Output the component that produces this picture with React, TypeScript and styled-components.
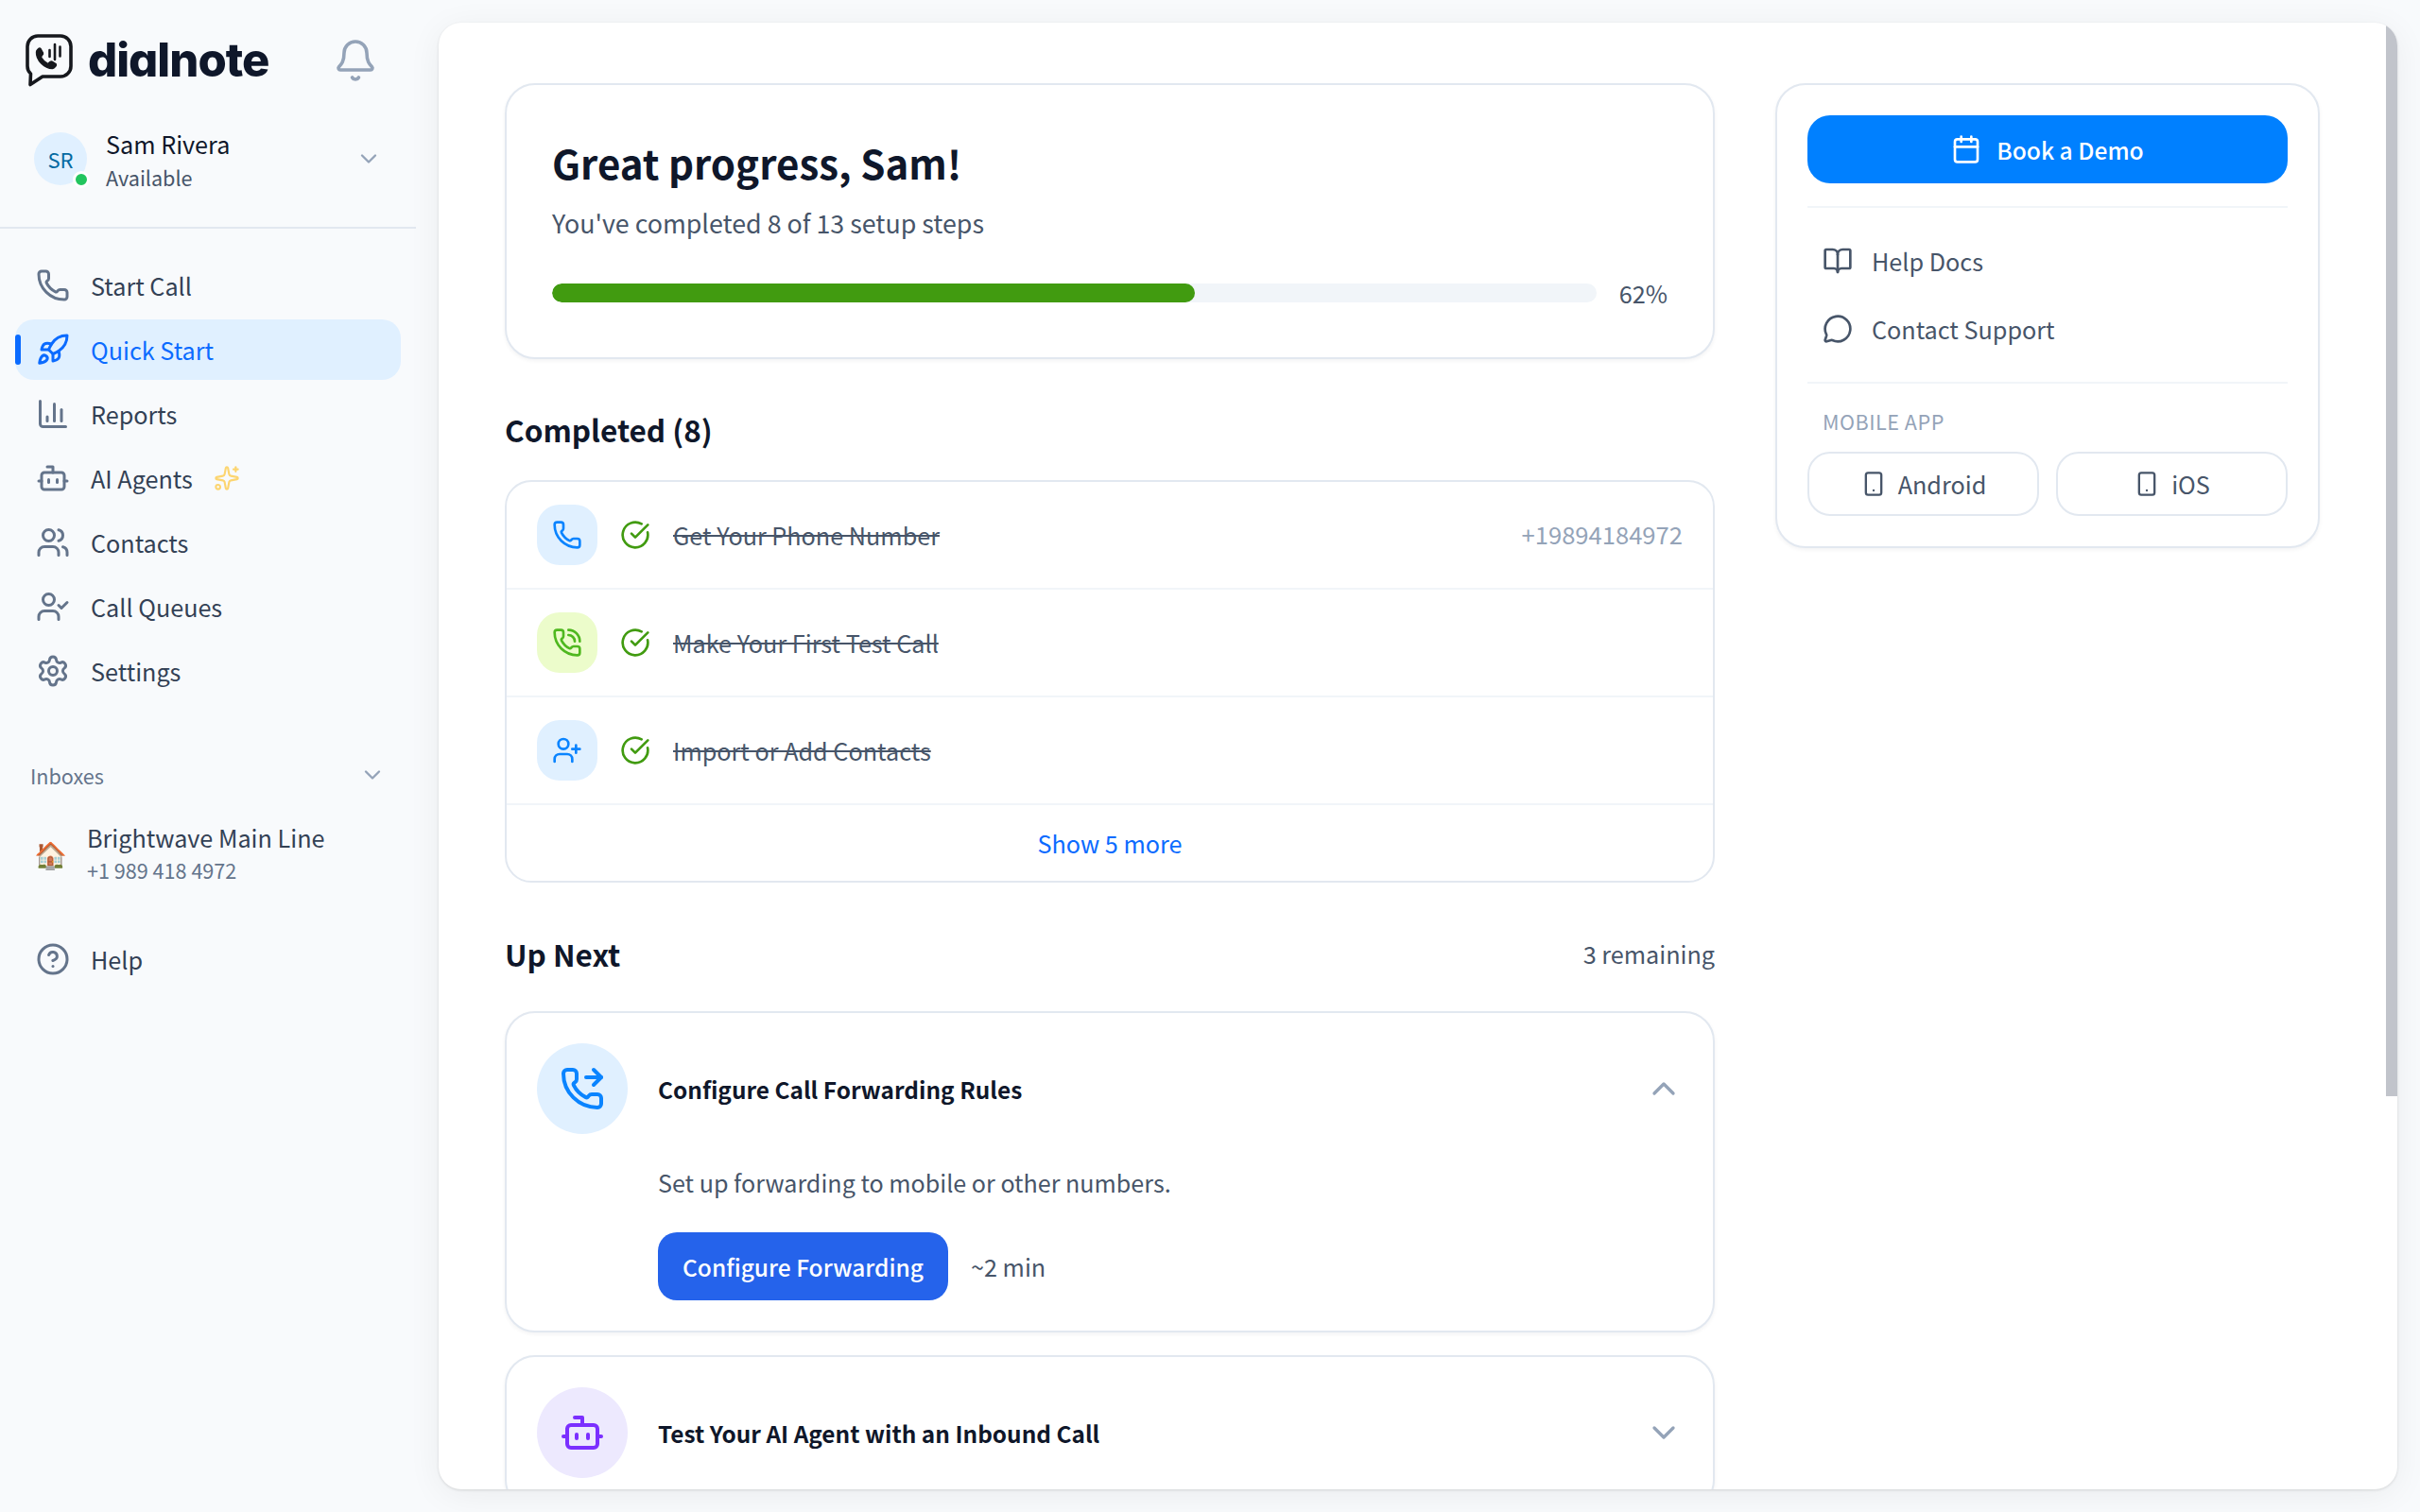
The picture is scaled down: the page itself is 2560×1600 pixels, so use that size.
import React from "react";
import { styled, createGlobalStyle } from "styled-components";
import {
  Bell, BookOpen, Bot, Calendar, ChartColumn, ChevronDown, ChevronUp, CircleCheckBig, CircleHelp,
  MessageCircle, Phone, PhoneCall, PhoneForwarded, Rocket, Settings, Smartphone, Sparkles,
  UserCheck, UserPlus, Users,
} from "lucide-react";

const GlobalStyle = createGlobalStyle`
  html, body { margin: 0; padding: 0; height: 100%; overflow: hidden; background: #f8fafc; }
  body { font-family: "Noto Sans CJK SC", "Noto Sans", sans-serif; color: #0f172a; }
  * { box-sizing: border-box; }
`;

const Page = styled.div`
  display: flex;
  height: 100vh;
  background: #f8fafc;
`;

const Sidebar = styled.aside`
  width: 440px;
  flex-shrink: 0;
  display: flex;
  flex-direction: column;
`;

const LogoRow = styled.div`
  display: flex;
  align-items: center;
  justify-content: space-between;
  padding: 36px 40px 0 27px;
  color: #94a3b8;
`;

const LogoMark = styled.div`
  display: flex;
  align-items: center;
  gap: 16px;
`;

const LogoText = styled.span`
  font-family: Inter, "Liberation Sans", sans-serif;
  font-size: 49px;
  font-weight: 800;
  line-height: 56px;
  letter-spacing: -1px;
  color: #0f172a;
  font-feature-settings: "cv11" 1;
`;

const UserRow = styled.div`
  display: flex;
  align-items: center;
  gap: 20px;
  height: 150px;
  padding: 48px 36px 44px 36px;
  border-bottom: 2px solid #e2e8f0;
  color: #94a3b8;
`;

const Avatar = styled.div`
  position: relative;
  width: 56px;
  height: 56px;
  border-radius: 50%;
  background: #e0f0ff;
  color: #0369a1;
  font-size: 22px;
  line-height: 56px;
  text-align: center;
  flex-shrink: 0;

  &::after {
    content: "";
    position: absolute;
    right: -3px;
    bottom: -3px;
    width: 12px;
    height: 12px;
    border-radius: 50%;
    background: #22c55e;
    border: 3px solid #fff;
    box-sizing: content-box;
  }
`;

const UserText = styled.div`
  flex: 1;
  display: flex;
  flex-direction: column;
  margin-top: 3px;
`;

const UserName = styled.span`
  font-size: 25.2px;
  line-height: 35px;
  color: #0f172a;
`;

const UserStatus = styled.span`
  font-size: 21.6px;
  line-height: 35px;
  color: #475569;
`;

const Nav = styled.nav`
  display: flex;
  flex-direction: column;
  gap: 4px;
  padding: 28px 16px 0;
`;

const NavItem = styled.a<{ $active?: boolean }>`
  position: relative;
  display: flex;
  align-items: center;
  gap: 22px;
  height: 64px;
  padding: 0 22px;
  border-radius: 20px;
  font-size: 25.2px;
  color: ${(p) => (p.$active ? "#0b6bff" : "#334155")};
  background: ${(p) => (p.$active ? "#e0f0ff" : "transparent")};

  svg:first-child {
    color: ${(p) => (p.$active ? "#0b6bff" : "#64748b")};
  }

  ${(p) =>
    p.$active &&
    `&::before {
      content: "";
      position: absolute;
      left: 0;
      top: 16px;
      width: 6px;
      height: 32px;
      border-radius: 3px;
      background: #0b6bff;
    }`}
`;

const AiSpark = styled(Sparkles)`
  color: #fcd570;
`;

const InboxHeader = styled.div`
  display: flex;
  align-items: center;
  justify-content: space-between;
  height: 36px;
  margin-top: 60px;
  padding: 0 32px;
  font-size: 21.6px;
  color: #64748b;
  svg {
    color: #94a3b8;
  }
`;

const InboxRow = styled.div`
  display: flex;
  align-items: center;
  gap: 24px;
  padding: 30px 36px 0;
`;

const InboxEmoji = styled.span`
  font-size: 28px;
  line-height: 32px;
  width: 32px;
  text-align: center;
  flex-shrink: 0;
`;

const InboxText = styled.div`
  display: flex;
  flex-direction: column;
`;

const InboxName = styled.span`
  font-size: 25.2px;
  line-height: 36px;
  color: #334155;
`;

const InboxPhone = styled.span`
  font-size: 21.6px;
  line-height: 34px;
  color: #64748b;
`;

const HelpNav = styled(Nav)`
  padding-top: 45px;
`;

const MainCard = styled.main`
  position: relative;
  flex: 1;
  margin: 24px;
  background: #fff;
  border-radius: 24px;
  box-shadow: 0 1px 3px rgba(0, 0, 0, 0.12), 0 6px 36px rgba(0, 0, 0, 0.06);
  overflow: hidden;
`;

const ScrollThumb = styled.div`
  position: absolute;
  top: 0;
  right: 0;
  width: 12px;
  height: 1136px;
  background: #c1c4cb;
`;

const Columns = styled.div`
  display: grid;
  grid-template-columns: 1280px 576px;
  gap: 64px;
  padding: 64px 0 0 70px;
  align-items: start;
`;

const LeftColumn = styled.div`
  display: flex;
  flex-direction: column;
`;

const Card = styled.section`
  background: #fff;
  border: 2px solid #e2e8f0;
  border-radius: 32px;
  box-shadow: 0 2px 4px rgba(15, 23, 42, 0.05);
`;

const ProgressCard = styled(Card)`
  padding: 50px 48px 0;
  height: 292px;
`;

const Heading = styled.h1`
  margin: 0;
  font-size: 42px;
  line-height: 64px;
  font-weight: 700;
  color: #0f172a;
`;

const SubText = styled.p`
  margin: 12px 0 0;
  font-size: 26.8px;
  line-height: 40px;
  color: #475569;
`;

const ProgressRow = styled.div`
  display: flex;
  align-items: center;
  gap: 24px;
  margin-top: 34px;
`;

const Track = styled.div`
  flex: 1;
  height: 20px;
  border-radius: 10px;
  background: #f1f5f9;
  overflow: hidden;
`;

const Fill = styled.div`
  height: 100%;
  border-radius: 10px;
  background: #419b10;
`;

const Percent = styled.span`
  font-size: 25.2px;
  line-height: 40px;
  color: #475569;
`;

const SectionHeader = styled.div<{ $top: number; $bottom: number }>`
  display: flex;
  align-items: center;
  justify-content: space-between;
  margin: ${(p) => p.$top}px 0 ${(p) => p.$bottom}px;
  height: 48px;
`;

const SectionTitle = styled.h2`
  margin: 0;
  font-size: 31.5px;
  line-height: 48px;
  font-weight: 700;
  color: #0f172a;
`;

const Remaining = styled.span`
  font-size: 25.2px;
  color: #475569;
`;

const ListCard = styled(Card)`
  border-radius: 28px;
  box-shadow: none;
  overflow: hidden;
`;

const DoneRow = styled.div`
  display: flex;
  align-items: center;
  gap: 24px;
  height: 114px;
  padding: 0 32px;
  border-bottom: 2px solid #f1f5f9;
`;

const Tile = styled.div<{ $bg: string; $fg: string }>`
  display: flex;
  align-items: center;
  justify-content: center;
  width: 64px;
  height: 64px;
  border-radius: 24px;
  background: ${(p) => p.$bg};
  color: ${(p) => p.$fg};
  flex-shrink: 0;
`;

const DoneCheck = styled(CircleCheckBig)`
  color: #419b10;
  flex-shrink: 0;
`;

const DoneLabel = styled.span`
  flex: 1;
  font-size: 25.2px;
  color: #475569;
  text-decoration: line-through;
`;

const DoneMeta = styled.span`
  font-size: 25.6px;
  margin-bottom: 3px;
  color: #94a3b8;
`;

const ShowMore = styled.div`
  height: 80px;
  display: flex;
  align-items: center;
  justify-content: center;
  font-size: 25.2px;
  color: #0b6bff;
`;

const StepCard = styled(Card)`
  padding: 32px;
  margin-bottom: 24px;
  border-radius: 32px;
`;

const StepHead = styled.div`
  display: flex;
  align-items: center;
  gap: 32px;
`;

const StepCircle = styled.div<{ $bg: string; $fg: string }>`
  display: flex;
  align-items: center;
  justify-content: center;
  width: 96px;
  height: 96px;
  border-radius: 50%;
  background: ${(p) => p.$bg};
  color: ${(p) => p.$fg};
  flex-shrink: 0;
`;

const StepTitle = styled.h3`
  flex: 1;
  margin: 0;
  font-size: 24.4px;
  font-weight: 700;
  color: #0f172a;
`;

const StepToggle = styled.span`
  display: flex;
  color: #94a3b8;
`;

const StepBody = styled.div`
  padding-left: 128px;
`;

const StepDesc = styled.p`
  margin: 31px 0 33px;
  font-size: 25.1px;
  line-height: 40px;
  color: #475569;
`;

const StepActions = styled.div`
  display: flex;
  align-items: center;
  gap: 24px;
`;

const PrimaryButton = styled.button`
  height: 72px;
  padding: 0 26px;
  border: 0;
  border-radius: 20px;
  background: #2563eb;
  color: #fff;
  font: 500 24.5px "Noto Sans CJK SC", sans-serif;
`;

const Duration = styled.span`
  font-size: 25.2px;
  color: #475569;
`;

const SideCard = styled(Card)`
  padding: 32px;
  border-radius: 32px;
`;

const DemoButton = styled.button`
  display: flex;
  align-items: center;
  justify-content: center;
  gap: 16px;
  width: 100%;
  height: 72px;
  border: 0;
  border-radius: 24px;
  background: #0080ff;
  color: #fff;
  font: 500 24.6px "Noto Sans CJK SC", sans-serif;
`;

const Divider = styled.div<{ $top: number; $bottom: number }>`
  height: 2px;
  margin: ${(p) => p.$top}px 0 ${(p) => p.$bottom}px;
  background: #f1f5f9;
`;

const SideLinks = styled.div`
  display: flex;
  flex-direction: column;
  gap: 8px;
`;

const SideLink = styled.a`
  display: flex;
  align-items: center;
  gap: 20px;
  height: 64px;
  padding: 0 16px;
  font-size: 25.2px;
  color: #475569;
`;

const SideLabel = styled.div`
  padding: 0 16px;
  font-size: 21.6px;
  line-height: 32px;
  letter-spacing: 0.5px;
  color: #94a3b8;
`;

const AppButtons = styled.div`
  display: grid;
  grid-template-columns: 1fr 1fr;
  gap: 18px;
  margin-top: 16px;
`;

const AppButton = styled.button`
  display: flex;
  align-items: center;
  justify-content: center;
  gap: 12px;
  height: 68px;
  border: 2px solid #e2e8f0;
  border-radius: 24px;
  background: #fff;
  color: #475569;
  font: 400 25.2px "Noto Sans CJK SC", sans-serif;
`;

const navItems = [
  { label: "Start Call", icon: Phone },
  { label: "Quick Start", icon: Rocket, active: true },
  { label: "Reports", icon: ChartColumn },
  { label: "AI Agents", icon: Bot, spark: true },
  { label: "Contacts", icon: Users },
  { label: "Call Queues", icon: UserCheck },
  { label: "Settings", icon: Settings },
];

const doneSteps = [
  { label: "Get Your Phone Number", icon: Phone, bg: "#e0f0ff", fg: "#0a84ff", meta: "+19894184972" },
  { label: "Make Your First Test Call", icon: PhoneCall, bg: "#ecfccb", fg: "#4fb81f" },
  { label: "Import or Add Contacts", icon: UserPlus, bg: "#e0f0ff", fg: "#0a84ff" },
];

function LogoIcon() {
  return (
    <svg width="50" height="56" viewBox="0 0 50 56" fill="none">
      <path
        d="M13 2h24a11 11 0 0 1 11 11v21a11 11 0 0 1-11 11H18L5 53.500 5.500 42Q2 39 2 34V13A11 11 0 0 1 13 2Z"
        stroke="#16181d"
        strokeWidth="3.600"
        strokeLinejoin="round"
      />
      <path
        d="M11.500 19c0-2 3-5 4.500-3.500l2.500 4.500c.5 1-.2 2-1.500 3.200-.6.6-.5 1.200 0 2.100 1.500 2.500 3.400 4.300 5.800 5.600.8.400 1.400.3 2-.4 1.100-1.300 2.100-2 3.200-1.400l4 2.500c1.500 1-1.300 4.800-3.500 4.900C20 36.500 11 27.500 11.500 19Z"
        fill="#16181d"
        stroke="#16181d"
        strokeWidth="1.400"
        strokeLinejoin="round"
      />
      <path d="M25.500 17v7M31 11v16M36.500 13.500v10" stroke="#16181d" strokeWidth="2.600" strokeLinecap="round" />
    </svg>
  );
}

export default function App() {
  return (
    <Page>
      <GlobalStyle />
      <Sidebar>
        <LogoRow>
          <LogoMark>
            <LogoIcon />
            <LogoText>dialnote</LogoText>
          </LogoMark>
          <Bell size={48} strokeWidth={1.8} />
        </LogoRow>
        <UserRow>
          <Avatar>SR</Avatar>
          <UserText>
            <UserName>Sam Rivera</UserName>
            <UserStatus>Available</UserStatus>
          </UserText>
          <ChevronDown size={28} />
        </UserRow>
        <Nav>
          {navItems.map((item) => (
            <NavItem key={item.label} $active={item.active}>
              <item.icon size={36} strokeWidth={2} />
              {item.label}
              {item.spark && <AiSpark size={28} strokeWidth={1.8} />}
            </NavItem>
          ))}
        </Nav>
        <InboxHeader>
          Inboxes
          <ChevronDown size={28} />
        </InboxHeader>
        <InboxRow>
          <InboxEmoji>🏠</InboxEmoji>
          <InboxText>
            <InboxName>Brightwave Main Line</InboxName>
            <InboxPhone>+1 989 418 4972</InboxPhone>
          </InboxText>
        </InboxRow>
        <HelpNav>
          <NavItem>
            <CircleHelp size={36} strokeWidth={2} />
            Help
          </NavItem>
        </HelpNav>
      </Sidebar>
      <MainCard>
        <ScrollThumb />
        <Columns>
          <LeftColumn>
            <ProgressCard>
              <Heading>Great progress, Sam!</Heading>
              <SubText>You've completed 8 of 13 setup steps</SubText>
              <ProgressRow>
                <Track>
                  <Fill style={{ width: `${(8 / 13) * 100}%` }} />
                </Track>
                <Percent>62%</Percent>
              </ProgressRow>
            </ProgressCard>
            <SectionHeader $top={50} $bottom={30}>
              <SectionTitle>Completed (8)</SectionTitle>
            </SectionHeader>
            <ListCard>
              {doneSteps.map((step) => (
                <DoneRow key={step.label}>
                  <Tile $bg={step.bg} $fg={step.fg}>
                    <step.icon size={32} strokeWidth={2} />
                  </Tile>
                  <DoneCheck size={32} strokeWidth={2} />
                  <DoneLabel>{step.label}</DoneLabel>
                  {step.meta && <DoneMeta>{step.meta}</DoneMeta>}
                </DoneRow>
              ))}
              <ShowMore>Show 5 more</ShowMore>
            </ListCard>
            <SectionHeader $top={51} $bottom={37}>
              <SectionTitle>Up Next</SectionTitle>
              <Remaining>3 remaining</Remaining>
            </SectionHeader>
            <StepCard>
              <StepHead>
                <StepCircle $bg="#e0f0ff" $fg="#0a84ff">
                  <PhoneForwarded size={48} strokeWidth={2} />
                </StepCircle>
                <StepTitle>Configure Call Forwarding Rules</StepTitle>
                <StepToggle>
                  <ChevronUp size={40} strokeWidth={2} />
                </StepToggle>
              </StepHead>
              <StepBody>
                <StepDesc>Set up forwarding to mobile or other numbers.</StepDesc>
                <StepActions>
                  <PrimaryButton>Configure Forwarding</PrimaryButton>
                  <Duration>~2 min</Duration>
                </StepActions>
              </StepBody>
            </StepCard>
            <StepCard>
              <StepHead>
                <StepCircle $bg="#ede9fe" $fg="#7b2fff">
                  <Bot size={48} strokeWidth={2} />
                </StepCircle>
                <StepTitle>Test Your AI Agent with an Inbound Call</StepTitle>
                <StepToggle>
                  <ChevronDown size={40} strokeWidth={2} />
                </StepToggle>
              </StepHead>
            </StepCard>
          </LeftColumn>
          <SideCard>
            <DemoButton>
              <Calendar size={32} strokeWidth={2} />
              Book a Demo
            </DemoButton>
            <Divider $top={24} $bottom={24} />
            <SideLinks>
              <SideLink>
                <BookOpen size={32} strokeWidth={2} />
                Help Docs
              </SideLink>
              <SideLink>
                <MessageCircle size={32} strokeWidth={2} />
                Contact Support
              </SideLink>
            </SideLinks>
            <Divider $top={24} $bottom={24} />
            <SideLabel>MOBILE APP</SideLabel>
            <AppButtons>
              <AppButton>
                <Smartphone size={28} strokeWidth={2} />
                Android
              </AppButton>
              <AppButton>
                <Smartphone size={28} strokeWidth={2} />
                iOS
              </AppButton>
            </AppButtons>
          </SideCard>
        </Columns>
      </MainCard>
    </Page>
  );
}
